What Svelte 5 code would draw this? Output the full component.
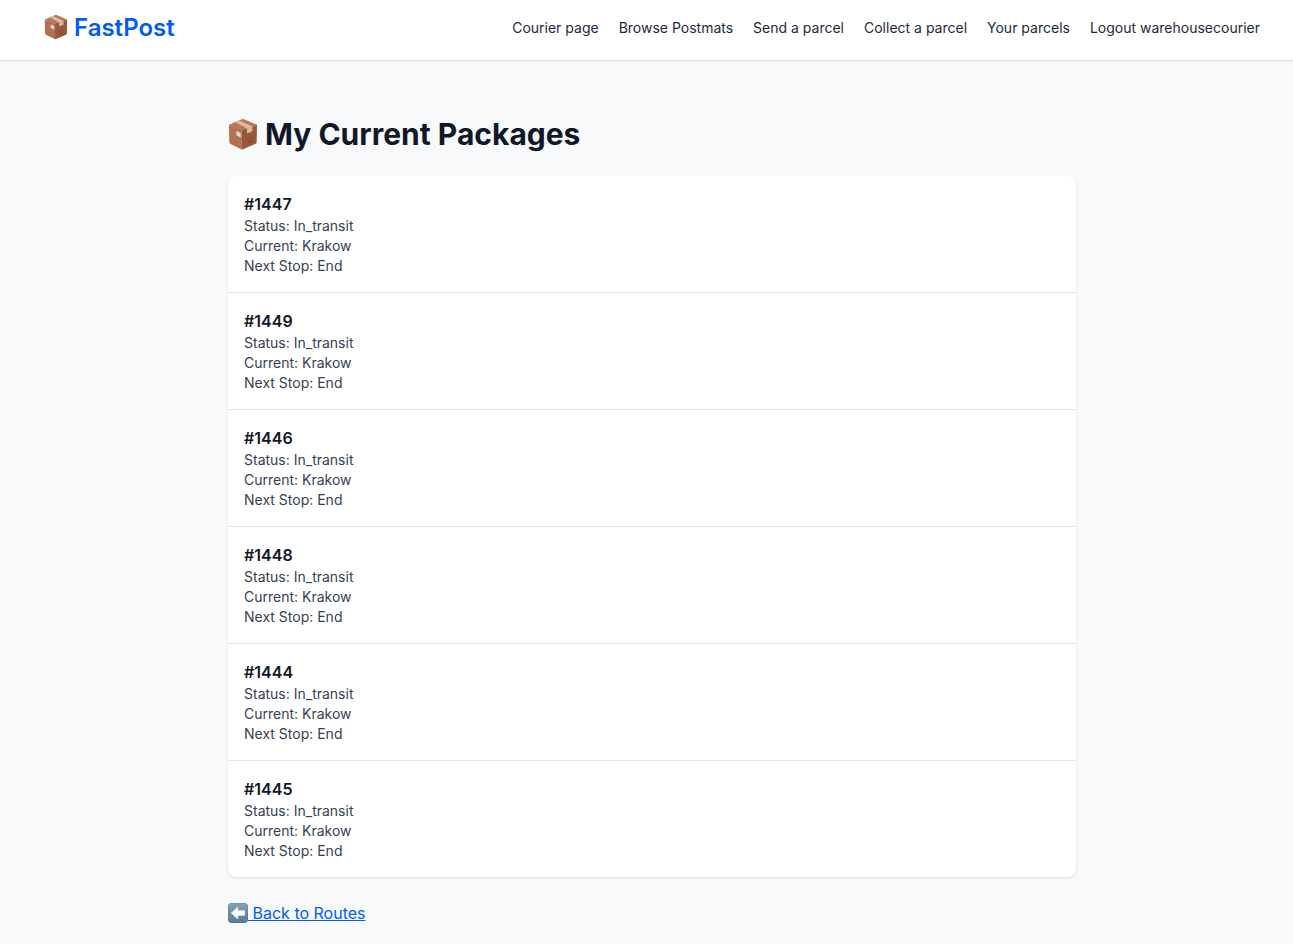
<script>
  const links = ['Courier page', 'Browse Postmats', 'Send a parcel', 'Collect a parcel', 'Your parcels', 'Logout warehousecourier'];
  const packages = [1447, 1449, 1446, 1448, 1444, 1445];
</script>

{#snippet parcel(cls)}
  <svg class={cls} viewBox="0 0 30 32" aria-hidden="true">
    <path fill="#b4704d" d="M1 6.800 13.800 11.800v19.800L2.400 25.900Q1.300 25.300 1.300 24z" />
    <path fill="#96593b" d="M13.800 11.800 29 6.800 28.700 24q0 1.200-1 1.800L15 31.300q-.6.300-1.200.3z" />
    <path fill="#b97855" d="M1 6.800 13.900 1.200q1-.4 2 0L29 6.800 13.800 12.300z" />
    <path fill="#dbbca4" d="m7.200 4.100 4-1.700 13.200 6.200-5.400 1.900z" />
    <path fill="#d3bbaa" d="m19 10.500 5.400-1.900v5l-1.300-.1-1.200 1.300-1.300-.2-1.600.9z" />
    <path fill="#dbe1e5" d="m8.400 13 4.300 1.900v4.500l-4.300-2z" />
    <path stroke="#b5c1ca" stroke-width=".6" d="m9.100 15.200 2.500 1.100M9.100 16.500l1.500.7" />
    <path fill="none" stroke="#633824" stroke-width=".9" d="m19.800 21.500.1.900m4.200-2.500-.1.900m-3.600 3.500q1.600.4 3.100-1.500" />
  </svg>
{/snippet}

<header>
  <div class="brand">{@render parcel('brand-icon')}<span>FastPost</span></div>
  <nav>
    {#each links as link}<a href="#top">{link}</a>{/each}
  </nav>
</header>

<main>
  <h1>{@render parcel('title-icon')}<span>My Current Packages</span></h1>
  <ul>
    {#each packages as id}
      <li>
        <strong>#{id}</strong>
        <p>Status: In_transit</p>
        <p>Current: Krakow</p>
        <p>Next Stop: End</p>
      </li>
    {/each}
  </ul>
  <a class="back" href="#routes">
    <svg viewBox="0 0 20 20" aria-hidden="true">
      <defs>
        <linearGradient id="key" x2="0" y2="1">
          <stop stop-color="#86a3b6" /><stop offset="1" stop-color="#5b7b92" />
        </linearGradient>
      </defs>
      <rect width="20" height="20" rx="4" fill="#4d6d83" />
      <rect x=".3" y=".3" width="19.400" height="19" rx="3.700" fill="url(#key)" />
      <path fill="#fff" stroke="#fff" stroke-width=".8" stroke-linejoin="round" d="m3.400 10 6.300-5.700v3.500h6.800v4.400H9.700v3.500z" />
    </svg><span>&nbsp;Back to Routes</span>
  </a>
</main>

<style>
  :global(body) {
    background: #f8f9fb;
    font-family: Inter, sans-serif;
    color: #101828;
  }
  header {
    box-sizing: border-box;
    height: 61px;
    padding: 12px 33px 16px 44px;
    display: flex;
    justify-content: space-between;
    background: #fff;
    border-bottom: 1px solid #dfe2e6;
    box-shadow: 0 1px 2px rgb(0 0 0 / 5%);
  }
  .brand {
    display: flex;
    align-items: center;
    height: 31px;
    gap: 6px;
    color: #005cf5;
    font-size: 24px;
    font-weight: 600;
  }
  .brand-icon { width: 24px; height: 25.600px; margin-top: -1px; }
  nav {
    display: flex;
    gap: 20px;
    height: 32px;
    align-items: center;
  }
  nav a {
    color: #1e2939;
    font-size: 14px;
    line-height: 20px;
    text-decoration: none;
  }
  main {
    width: 848px;
    margin-left: 228px;
    padding-top: 55px;
  }
  h1 {
    display: flex;
    align-items: center;
    gap: 7px;
    margin: 0 0 24px;
    font-size: 30px;
    line-height: 36px;
    font-weight: 700;
  }
  .title-icon { width: 30px; height: 32px; }
  ul {
    margin: 0 0 24px;
    padding: 0;
    list-style: none;
    overflow: hidden;
    border-radius: 8px;
    background: #fff;
    box-shadow: 0 1px 3px rgb(0 0 0 / 10%), 0 1px 2px -1px rgb(0 0 0 / 10%);
  }
  li { padding: 16px; }
  li + li { border-top: 1px solid #e0e3e8; }
  strong {
    display: block;
    font-size: 16px;
    line-height: 24px;
    font-weight: 600;
  }
  p {
    margin: 0;
    color: #364153;
    font-size: 14px;
    line-height: 20px;
  }
  .back {
    display: inline-flex;
    align-items: center;
    color: #005cf5;
    font-size: 16px;
    line-height: 24px;
    text-decoration: none;
  }
  .back svg { width: 20px; height: 20px; }
  .back span { text-decoration: underline; }
</style>
